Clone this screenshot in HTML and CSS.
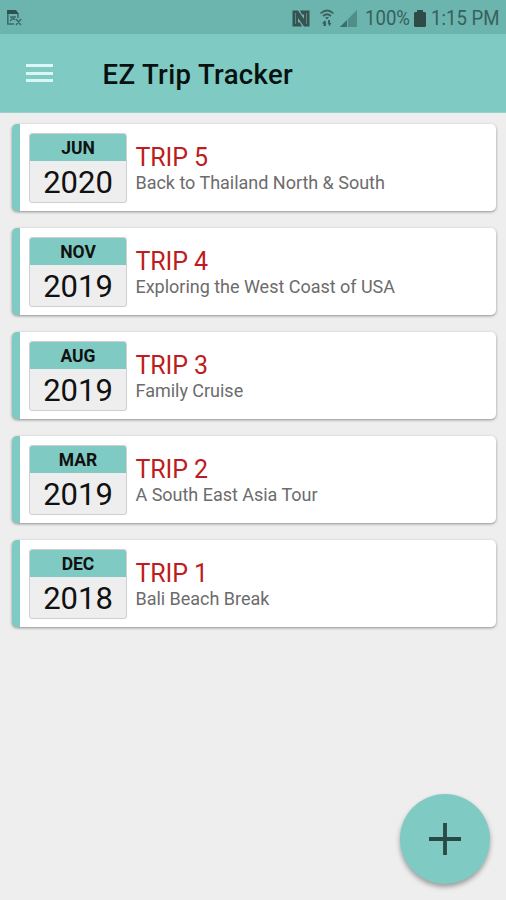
FILE: index.html
```html
<!DOCTYPE html>
<html lang="en">
<head>
<meta charset="utf-8">
<title>EZ Trip Tracker</title>
<link rel="stylesheet" href="styles.css">
</head>
<body>
<div class="app">
  <div class="status">
    <svg class="notice" viewBox="0 0 16 18" width="16" height="18"><path d="M1.800 2v13H8M12 5v4M4 8h6M4 12l3-3 2 2M10 10l5 6M15 10l-5 6" fill="none" stroke="#3b6b66" stroke-width="1.500"/><path d="M1 1h9l3 4H1z" fill="#2f514f"/></svg>
    <svg class="nfc" viewBox="0 0 18 17" width="18" height="17"><path d="M.5.5H6l6 8.500V4.500H10L8 .5h9.500v16H12L6 8v4.500h2l2 4H.5z" fill="#36534f"/><path d="M3.500 3v11M14.500 3v11" stroke="#599b94" stroke-width=".8"/></svg>
    <svg class="wifi" viewBox="0 0 16 18" width="16" height="18"><path d="M1.500 4.500Q8-1.500 14.500 4.500M4 7Q8 3.500 12 7" fill="none" stroke="#3b625d" stroke-width="1.700"/><path d="M6 8h4l-2 2.500zM3 14.500l2.500-3 1.500 1V17H4.500v-2.500zM9 11h2v3h1.500l-2 3-2-3H9z" fill="#3b625d"/></svg>
    <svg class="signal" viewBox="0 0 18 17" width="18" height="17"><path d="M17 0v17H0z" fill="#4f8f88"/><path d="M7 10v7H0z" fill="#3b706a"/><path d="M7.500 8v9" stroke="#68afa7"/></svg>
    <span class="percent"><span>100%</span></span>
    <svg class="battery" viewBox="0 0 12 17" width="12" height="17"><path d="M3 0h6v2h2l1 1v13l-1 1H1l-1-1V3l1-1h2z" fill="#2f4b48"/></svg>
    <span class="time"><span>1:15 PM</span></span>
  </div>
  <header class="bar">
    <div class="menu"><i></i><i></i><i></i></div>
    <h1>EZ Trip Tracker</h1>
  </header>
  <main class="trips">
    <article class="card"><div class="date"><div class="month">JUN</div><div class="year">2020</div></div><div class="info"><h2>TRIP 5</h2><p>Back to Thailand North &amp; South</p></div></article>
    <article class="card"><div class="date"><div class="month">NOV</div><div class="year">2019</div></div><div class="info"><h2>TRIP 4</h2><p>Exploring the West Coast of USA</p></div></article>
    <article class="card"><div class="date"><div class="month">AUG</div><div class="year">2019</div></div><div class="info"><h2>TRIP 3</h2><p>Family Cruise</p></div></article>
    <article class="card"><div class="date"><div class="month">MAR</div><div class="year">2019</div></div><div class="info"><h2>TRIP 2</h2><p>A South East Asia Tour</p></div></article>
    <article class="card"><div class="date"><div class="month">DEC</div><div class="year">2018</div></div><div class="info"><h2>TRIP 1</h2><p>Bali Beach Break</p></div></article>
  </main>
  <button class="fab" aria-label="Add trip"><svg viewBox="0 0 32 32" width="32" height="32"><path d="M16 0v32M0 16h32" stroke="#294947" stroke-width="3.800"/></svg></button>
</div>
</body>
</html>
```

FILE: styles.css
```css
* { box-sizing: border-box; }
body { margin: 0; font-family: Roboto, sans-serif; }
.app { position: relative; width: 506px; height: 900px; background: #eee; overflow: hidden; }
.status { display: flex; align-items: center; height: 34px; padding: 2px 7px 0 6px; background: #6bb5ae; color: #38605c; font-size: 20px; line-height: 34px; white-space: nowrap; }
.status svg { flex: none; }
.notice { margin-right: auto; }
.wifi { margin-left: 9px; }
.signal { margin-left: 5px; }
.percent { width: 44px; margin-left: 7px; }
.percent span, .time span { display: inline-block; transform-origin: left center; }
.percent span { transform: scaleX(.93); }
.battery { margin-left: 5px; }
.time { width: 68px; margin-left: 5px; }
.time span { transform: scaleX(.93); }
.bar { display: flex; align-items: center; height: 79px; background: #7fcbc3; border-bottom: 1px solid #95d0ca; }
.menu { display: flex; flex-direction: column; gap: 4.500px; width: 27px; margin: 0 50px 0 26px; }
.menu i { height: 3px; background: #d9f7f4; }
h1 { margin: 4px 0 0 -.5px; font-size: 27.500px; letter-spacing: .36px; font-weight: 500; line-height: 32px; color: #07110f; white-space: nowrap; }
.trips { display: flex; flex-direction: column; gap: 17px; padding: 11px 10px 0 12px; }
.card { display: flex; height: 87px; padding: 9px 0 0 9px; border-left: 8px solid #7fcbc3; border-radius: 5px; background: #fff; box-shadow: 0 1px 3px rgba(0,0,0,.4); }
.date { width: 98px; height: 70px; border: 1px solid #cfcfcf; border-radius: 3px; overflow: hidden; background: #eee; text-align: center; color: #111; }
.month { height: 27px; background: #7fcbc3; font-size: 17.500px; font-weight: 700; line-height: 28px; }
.year { font-size: 31px; line-height: 43px; }
.info { margin-left: 8.500px; padding-top: 10px; }
h2 { margin: 0; font-size: 25px; font-weight: 400; line-height: 30px; letter-spacing: -.1px; color: #bd1c20; }
p { margin: -1px 0 0; font-size: 18px; line-height: 22px; letter-spacing: -.02px; color: #6c6c6c; white-space: nowrap; }
.fab { position: absolute; left: 400px; top: 794px; display: flex; align-items: center; justify-content: center; width: 90px; height: 90px; padding: 0; border: 0; border-radius: 50%; background: #7fcbc3; box-shadow: 0 3px 5px rgba(0,0,0,.35); }
```
